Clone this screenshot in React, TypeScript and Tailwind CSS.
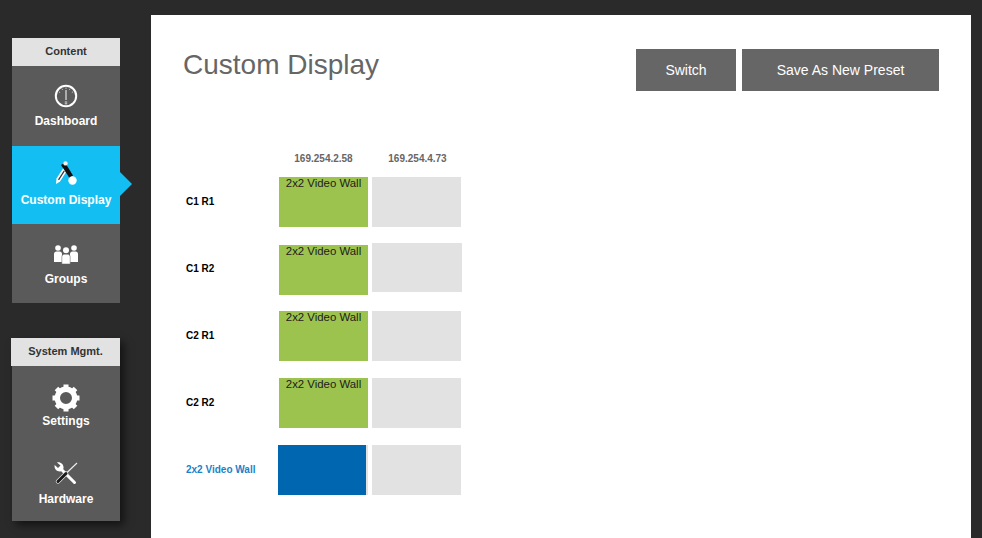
import React from 'react';

const DashboardIcon = () => (
  <svg width="24" height="24" viewBox="0 0 24 24" fill="none" stroke="#fff">
    <circle cx="12" cy="12" r="10.200" strokeWidth="2" />
    <path d="M12 6v10" strokeWidth="1" />
    <path d="M12 3.600v1.200M8 4.800l.5.900M16 4.800l-.5.900M5.200 8l.9.500M18.800 8l-.9.500" strokeWidth="0.8" />
    <path d="M10.800 18h2.400M10.800 19.800h2.400" strokeWidth="1" strokeDasharray="1 .4" />
  </svg>
);

const CustomDisplayIcon = () => (
  <svg width="22" height="24" viewBox="0 0 22 24">
    <path d="M1 23l.5-5.500L9 6l3.500 3L5 20.500z" fill="#fff" />
    <path d="M8.800 9.500l1 .8-5.800 9-1-.8z" fill="#333" />
    <path d="M6 4l4-2.500 8 13-3.500 2.500z" fill="#111" />
    <circle cx="10.500" cy="2.400" r="2.200" fill="#eee" />
    <circle cx="17.500" cy="19.500" r="4.200" fill="#fff" />
  </svg>
);

const GroupsIcon = () => (
  <svg width="24" height="19" viewBox="0 0 24 19" fill="#fff">
    <circle cx="4" cy="3" r="2.800" />
    <circle cx="20" cy="3" r="2.800" />
    <path d="M0 17V9c0-1.500 1-2.400 2.400-2.400h3.200C7 6.600 8 7.500 8 9v8z" />
    <path d="M16 17V9c0-1.500 1-2.400 2.400-2.400h3.200C23 6.600 24 7.500 24 9v8z" />
    <circle cx="12" cy="5.200" r="3" />
    <path d="M7.800 19v-7c0-1.700 1.300-2.800 2.800-2.800h2.800c1.500 0 2.800 1.100 2.800 2.800v7z" stroke="#5a5a5a" strokeWidth="0.500" />
  </svg>
);

const GearIcon = () => (
  <svg width="28" height="28" viewBox="0 0 28 28" fill="#fff">
    <circle cx="14" cy="14" r="8.700" fill="none" stroke="#fff" strokeWidth="5.400" />
    {[0, 45, 90, 135, 180, 225, 270, 315].map(a => (
      <rect key={a} x="11.500" y="0.500" width="5" height="5" transform={`rotate(${a} 14 14)`} />
    ))}
  </svg>
);

const HardwareIcon = () => (
  <svg width="24" height="24" viewBox="0 0 24 24">
    <path d="M3 .500L6.500 3.500 4 6 .700 3C-.200 6.500 2.500 10 6.500 9.500L9.500 6.500C10 2.500 6.500-.500 3 .500z" fill="#fff" />
    <path d="M7.500 7.500L20.500 20.500" stroke="#fff" strokeWidth="3" strokeLinecap="round" />
    <path d="M23 1L12 11.500" stroke="#eee" strokeWidth="1.100" />
    <path d="M12 11.500L4 19.500" stroke="#e8e8e8" strokeWidth="4.400" strokeLinecap="round" />
    <path d="M12 11.500L4 19.500" stroke="#1a1a1a" strokeWidth="3" strokeLinecap="round" />
  </svg>
);

type NavItemProps = {
  label: string;
  icon: React.ReactNode;
  iconTop: string;
  height: string;
  active?: boolean;
};

const NavItem = ({ label, icon, iconTop, height, active }: NavItemProps) => (
  <div className={`relative flex flex-col items-center ${height} ${active ? 'bg-[#13bff2]' : ''}`}>
    <div className={`flex shrink-0 justify-center ${active ? 'h-[46px]' : 'h-[47px]'} ${iconTop}`}>{icon}</div>
    <span className="text-[12px] leading-4 font-bold text-white">{label}</span>
    {active && (
      <span className="absolute top-[26px] left-full h-0 w-0 border-y-[12px] border-l-[12px] border-y-transparent border-l-[#13bff2]" />
    )}
  </div>
);

const SideHeader = ({ children, extraClass }: { children: React.ReactNode; extraClass?: string }) => (
  <div className={`flex h-[28px] items-center justify-center bg-[#e2e2e2] pb-[2px] text-[11px] font-bold text-[#333] ${extraClass ?? ''}`}>
    {children}
  </div>
);

type RowProps = {
  label: string;
  assigned?: boolean;
  selected?: boolean;
  labelClass?: string;
  rowClass: string;
  greyClass?: string;
  greenClass?: string;
};

const Row = ({ label, assigned, selected, labelClass, rowClass, greyClass, greenClass }: RowProps) => (
  <div className={`flex items-start ${rowClass}`}>
    <div className={`flex h-[50px] w-[96px] shrink-0 items-center pb-[2px] pl-[3px] text-[10px] font-bold ${labelClass ?? 'text-black'}`}>
      {label}
    </div>
    {assigned && (
      <div className={`h-[50px] w-[89px] shrink-0 bg-[#9cc34e] text-center text-[11.400px] leading-[13px] text-[#1c1c1c] ${greenClass ?? ''}`}>
        2x2 Video Wall
      </div>
    )}
    {selected && (
      <div className="h-[50px] w-[89px] shrink-0 bg-[#e2e2e2]">
        <div className="-ml-px h-full w-[88px] bg-[#0066b0]" />
      </div>
    )}
    <div className={`ml-1 shrink-0 bg-[#e2e2e2] ${greyClass ?? 'h-[50px] w-[89px]'}`} />
  </div>
);

export default function App() {
  return (
    <div
      className="flex h-[538px] w-full overflow-hidden bg-[#2a2a2a]"
      style={{ fontFamily: '"Liberation Sans", Arial, sans-serif' }}
    >
      <aside className="flex w-[151px] shrink-0 flex-col pt-[38px] pl-3">
        <div className="w-[108px] bg-[#5a5a5a]">
          <SideHeader>Content</SideHeader>
          <NavItem label="Dashboard" icon={<DashboardIcon />} iconTop="pt-[18px]" height="h-[80px]" />
          <NavItem label="Custom Display" icon={<CustomDisplayIcon />} iconTop="pt-[15px]" height="h-[78px]" active />
          <NavItem label="Groups" icon={<GroupsIcon />} iconTop="pt-[21px]" height="h-[79px]" />
        </div>
        <div className="mt-[35px] w-[108px] bg-[#5a5a5a] shadow-[4px_4px_8px_rgba(0,0,0,0.55)]">
          <SideHeader extraClass="-ml-px w-[109px]">System Mgmt.</SideHeader>
          <NavItem label="Settings" icon={<GearIcon />} iconTop="pt-[18px]" height="h-[78px]" />
          <NavItem label="Hardware" icon={<HardwareIcon />} iconTop="pt-[18px]" height="h-[77px]" />
        </div>
      </aside>

      <main className="mt-[15px] mr-[11px] flex-1 bg-white pt-[34px] pr-8 pl-8">
        <div className="flex items-start justify-between">
          <h1 className="text-[28px] leading-8 font-normal text-[#666]">Custom Display</h1>
          <div className="flex gap-[6px]">
            <button className="h-[42px] w-[100px] bg-[#666] text-[14px] text-white">Switch</button>
            <button className="h-[42px] w-[197px] bg-[#666] text-[14px] text-white">Save As New Preset</button>
          </div>
        </div>

        <div className="mt-[56px]">
          <div className="flex h-[28px] pb-[6px] text-[10px] font-bold text-[#666]">
            <div className="w-[96px]" />
            <div className="flex w-[89px] items-center justify-center">169.254.2.58</div>
            <div className="ml-1 flex w-[89px] items-center justify-center pl-[2px]">169.254.4.73</div>
          </div>
          <Row label="C1 R1" assigned rowClass="mt-[2px]" />
          <Row label="C1 R2" assigned rowClass="mt-[16px]" labelClass="mt-px text-black" greenClass="mt-[2px]" greyClass="h-[49px] w-[90px]" />
          <Row label="C2 R1" assigned rowClass="mt-[16px]" />
          <Row label="C2 R2" assigned rowClass="mt-[17px]" />
          <Row label="2x2 Video Wall" selected rowClass="mt-[17px]" labelClass="text-[#1a82c8]" />
        </div>
      </main>
    </div>
  );
}
